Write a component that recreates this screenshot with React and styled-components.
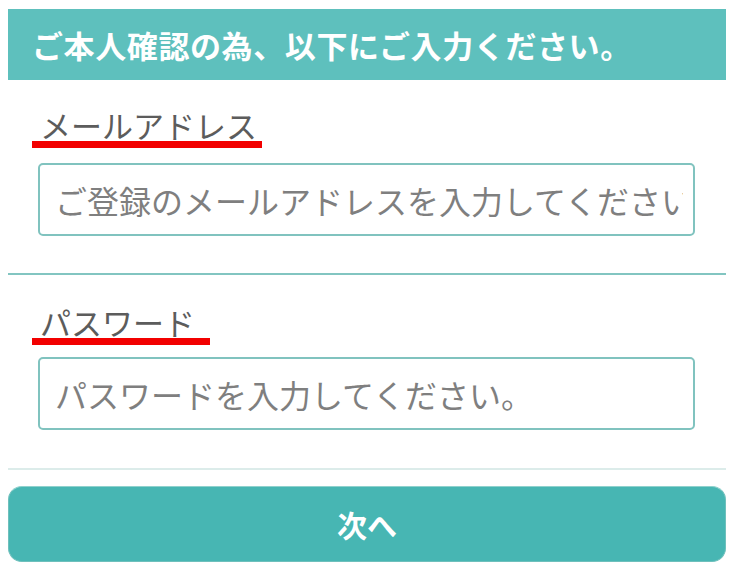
import React from "react";
import styled, { createGlobalStyle } from "styled-components";

const GlobalStyle = createGlobalStyle`
  html, body {
    margin: 0;
    padding: 0;
    background: #fff;
  }
  body {
    font-family: "Noto Sans CJK JP", "Noto Sans", sans-serif;
  }
`;

const Page = styled.div`
  width: 734px;
  height: 580px;
  box-sizing: border-box;
  padding: 9px 8px 0;
  display: flex;
  flex-direction: column;
`;

const Header = styled.div`
  height: 71px;
  background: #5ec0bd;
  color: #fff;
  font-size: 31px;
  font-weight: 700;
  display: flex;
  align-items: center;
  padding-left: 24px;
  letter-spacing: 0.6px;
`;

const Field = styled.div`
  display: flex;
  flex-direction: column;
  align-items: flex-start;
  padding: ${({ top }) => top}px 31px 0 24px;
`;

const Label = styled.label`
  display: inline-block;
  box-sizing: border-box;
  width: ${({ width }) => width}px;
  padding-left: 8px;
  font-size: 31px;
  line-height: 33px;
  color: #5c5c5c;
  border-bottom: 7px solid #f20000;
`;

const Input = styled.input`
  box-sizing: border-box;
  align-self: stretch;
  margin: ${({ gap }) => gap}px 0 0 6px;
  height: 73px;
  border: 2px solid #80c3bf;
  border-radius: 5px;
  padding: 0 10px 0 15px;
  font-family: "Noto Sans CJK JP", "Noto Sans", sans-serif;
  font-size: 32px;
  color: #555;
  background: #fff;
  outline: none;

  &::placeholder {
    color: #7f7f7f;
  }
`;

const Divider = styled.hr`
  margin: ${({ top }) => top}px 0 0;
  border: none;
  height: 2px;
  background: ${({ light }) => (light ? "#dcecea" : "#82c5c1")};
`;

const NextButton = styled.button`
  margin-top: 16px;
  height: 76px;
  border: 1px solid #6fc0bc;
  border-top-color: #8fd1cd;
  border-radius: 14px;
  background: #47b6b3;
  color: #fff;
  font-family: "Noto Sans CJK JP", "Noto Sans", sans-serif;
  font-size: 30px;
  font-weight: 700;
  cursor: pointer;
`;

const App = () => (
  <>
    <GlobalStyle />
    <Page>
      <Header>ご本人確認の為、以下にご入力ください。</Header>
      <Field top={28}>
        <Label width={230}>メールアドレス</Label>
        <Input gap={15} type="email" placeholder="ご登録のメールアドレスを入力してください" />
      </Field>
      <Divider top={37} />
      <Field top={30}>
        <Label width={178}>パスワード</Label>
        <Input gap={12} type="password" placeholder="パスワードを入力してください。" />
      </Field>
      <Divider top={38} light />
      <NextButton type="button">次へ</NextButton>
    </Page>
  </>
);

export default App;
